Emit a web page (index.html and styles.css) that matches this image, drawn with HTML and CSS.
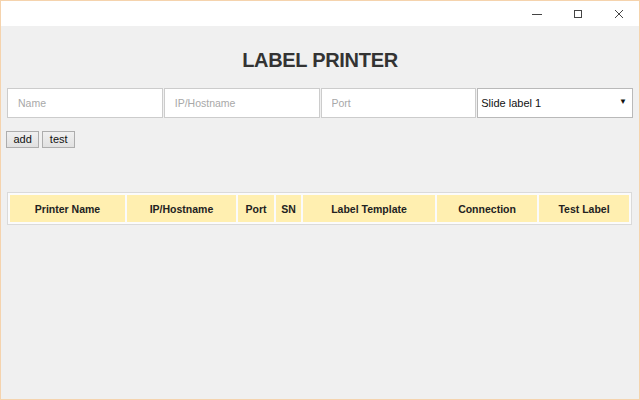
FILE: index.html
```html
<!DOCTYPE html>
<html>
<head>
<meta charset="utf-8">
<title>Label Printer</title>
<link rel="stylesheet" href="styles.css">
</head>
<body>
<div class="window">
  <div class="titlebar">
    <div class="ctrl">
      <svg width="10" height="10" viewBox="0 0 10 10"><path d="M0 5.5H10" stroke="#444" stroke-width="1"/></svg>
    </div>
    <div class="ctrl">
      <svg width="10" height="10" viewBox="0 0 10 10"><rect x="1.5" y="1.5" width="7" height="7" fill="none" stroke="#444" stroke-width="1"/></svg>
    </div>
    <div class="ctrl">
      <svg width="10" height="10" viewBox="0 0 10 10"><path d="M1 1L9 9M9 1L1 9" stroke="#444" stroke-width="1"/></svg>
    </div>
  </div>
  <div class="content">
    <h1 class="title">LABEL PRINTER</h1>
    <div class="fields">
      <input class="field" type="text" placeholder="Name">
      <input class="field" type="text" placeholder="IP/Hostname">
      <input class="field" type="text" placeholder="Port">
      <div class="select-wrap">
        <select class="select">
          <option>Slide label 1</option>
        </select>
      </div>
    </div>
    <div class="buttons">
      <button class="btn">add</button>
      <button class="btn">test</button>
    </div>
    <table class="printers">
      <thead>
        <tr>
          <th class="c-name">Printer Name</th>
          <th class="c-ip">IP/Hostname</th>
          <th class="c-port">Port</th>
          <th class="c-sn">SN</th>
          <th class="c-tpl">Label Template</th>
          <th class="c-conn">Connection</th>
          <th class="c-test">Test Label</th>
        </tr>
      </thead>
    </table>
  </div>
</div>
</body>
</html>
```

FILE: styles.css
```css
html, body {
  margin: 0;
  padding: 0;
}
body {
  font-family: "Liberation Sans", Arial, sans-serif;
}
.window {
  box-sizing: border-box;
  width: 640px;
  height: 400px;
  border: 1px solid #f5d3ad;
  background: #f0f0f0;
  display: flex;
  flex-direction: column;
  overflow: hidden;
}
.titlebar {
  height: 25px;
  background: #ffffff;
  display: flex;
  justify-content: flex-end;
  flex-shrink: 0;
}
.ctrl {
  width: 41px;
  height: 25px;
  display: flex;
  align-items: center;
  justify-content: center;
}
.ctrl svg {
  display: block;
}
.content {
  padding: 0 6px;
}
.title {
  margin: 23px 0 0;
  text-align: center;
  font-size: 20px;
  line-height: 23px;
  font-weight: bold;
  letter-spacing: -0.3px;
  color: #333333;
}
.fields {
  margin-top: 16px;
  display: grid;
  grid-template-columns: repeat(4, minmax(0, 1fr));
  column-gap: 1px;
}
.field,
.select-wrap {
  min-width: 0;
  width: 100%;
  margin: 0;
}
.field {
  box-sizing: border-box;
  height: 30px;
  border: 1px solid #cccccc;
  background: #ffffff;
  padding: 0 10px;
  font-family: "Liberation Sans", Arial, sans-serif;
  font-size: 10.5px;
  color: #222;
  outline: none;
}
.field::placeholder {
  color: #a8a8a8;
}
.select-wrap {
  position: relative;
}
.select {
  box-sizing: border-box;
  width: 100%;
  height: 30px;
  margin: 0;
  border: 1px solid #b9b9b9;
  background: #ffffff;
  padding: 0 3px;
  font-family: "Liberation Sans", Arial, sans-serif;
  font-size: 11px;
  color: #111;
  appearance: none;
  -webkit-appearance: none;
  border-radius: 0;
  outline: none;
}
.select-wrap::after {
  content: "\25BC";
  position: absolute;
  right: 6px;
  top: 9px;
  font-size: 8px;
  color: #111;
  pointer-events: none;
}
.buttons {
  margin: 13px 0 0 -1px;
  display: flex;
  gap: 3px;
}
.btn {
  box-sizing: border-box;
  height: 17px;
  margin: 0;
  padding: 0 6.5px;
  border: 1px solid #adadad;
  background: linear-gradient(#f0f0f0, #e1e1e1);
  font-family: "Liberation Sans", Arial, sans-serif;
  font-size: 11px;
  color: #111;
  line-height: 15px;
  border-radius: 0;
}
.printers {
  margin-top: 44px;
  width: calc(100% - 1px);
  table-layout: fixed;
  border: 1px solid #dadada;
  border-spacing: 2px;
  background: #fbfbfb;
}
.printers th {
  height: 27px;
  padding: 0;
  background: #ffefb0;
  font-size: 10.5px;
  font-weight: bold;
  color: #222;
  text-align: center;
  vertical-align: middle;
}
.c-name { width: 115px; }
.c-ip { width: 109px; }
.c-port { width: 36px; }
.c-sn { width: 25px; }
.c-tpl { width: 132px; }
.c-conn { width: 100px; }
.c-test { width: 90px; }
```
